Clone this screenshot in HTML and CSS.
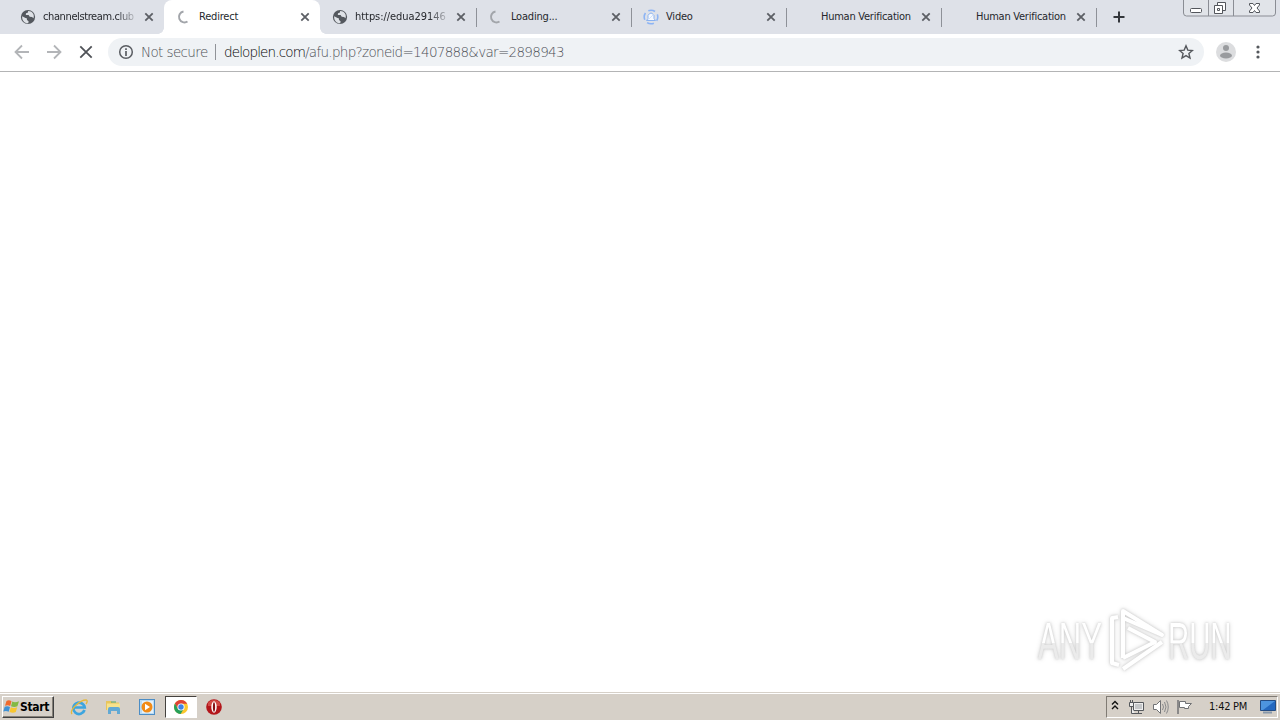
FILE: index.html
```
<!DOCTYPE html>
<html lang="en">
<head>
<meta charset="utf-8">
<title>Redirect</title>
<link rel="stylesheet" href="styles.css">
</head>
<body>
<svg width="0" height="0" class="defs">
<defs>
<symbol id="globe" viewBox="0 0 16 16"><circle cx="8" cy="8" r="7.1" fill="#54585e"/><path d="M2.2 7.2 5.5 9 6.8 9.2 7 11 8.6 12.3 8.3 14.2C4.9 14.5 1.6 11.5 2.2 7.2ZM8.2 2.1 7.7 3.8 6 4.2 5.8 6H8.6L9.7 7.700 12 8 13.5 9.3C14.9 5.5 12 2 8.2 2.1Z" fill="#dee1e6"/></symbol>
<symbol id="spin" viewBox="0 0 16 16"><path d="M7.500 2.500A5.500 5.500 0 1 0 11.500 12.500" fill="none" stroke="#a2a5aa" stroke-width="2"/></symbol>
<symbol id="x" viewBox="0 0 10 10"><path d="M1.300 1.300 8.700 8.700M8.700 1.300 1.300 8.700" stroke="#5c5f65" stroke-width="1.800"/></symbol>
</defs>
</svg>
<div class="screen">
<header class="tabs">
  <div class="tab wide"><svg class="fav"><use href="#globe"/></svg><span class="title fade s1">channelstream.club</span><svg class="close"><use href="#x"/></svg></div>
  <div class="tab wide active"><svg class="fav"><use href="#spin"/></svg><span class="title s2">Redirect</span><svg class="close"><use href="#x"/></svg></div>
  <div class="tab wide"><svg class="fav"><use href="#globe"/></svg><span class="title fade s3">https://edua29146</span><svg class="close"><use href="#x"/></svg></div>
  <div class="tab sep"><svg class="fav"><use href="#spin"/></svg><span class="title s4">Loading...</span><svg class="close"><use href="#x"/></svg></div>
  <div class="tab sep"><svg class="fav" viewBox="0 0 16 16"><circle cx="8" cy="8" r="6.800" fill="none" stroke="#8cb4f5" stroke-width="1.600" stroke-dasharray="7 3.700" stroke-dashoffset="3"/><path d="M3.500 11.500 5 9.500V6.500Q8 1.500 11 6.500V9.500l1.500 2Z" fill="#f5f9ff" stroke="#8ab2f0"/><path d="m5.500 10.500 5-5" stroke="#cfe0fa"/></svg><span class="title s5">Video</span><svg class="close"><use href="#x"/></svg></div>
  <div class="tab sep"><span class="fav"></span><span class="title s6">Human Verification</span><svg class="close"><use href="#x"/></svg></div>
  <div class="tab sep"><span class="fav"></span><span class="title s6">Human Verification</span><svg class="close"><use href="#x"/></svg></div>
  <div class="newtab"><svg width="12" height="12"><path d="M6 .5v11M.5 6h11" stroke="#33363b" stroke-width="2"/></svg></div>
  <svg class="winctl" width="94" height="18" fill="none"><path d="M.5 0v13q0 3 3 3h86q3 0 3-3V0" fill="#e1e4e9" stroke="#8a8d94"/><path d="M25.500 0v16M50.500 0v16" stroke="#8a8d94"/><g stroke="#53565c" fill="#fff"><rect x="7.500" y="8.500" width="11" height="4" rx="1"/><path d="M34.500 2.500h8v8h-8z"/><path d="M31.500 5.500h8v8h-8z"/><path d="M34.500 8.500h2v2h-2z"/><path d="M66.500 3.500h3.500l1.500 2 1.500-2h3.500v1.500l-2.500 3 2.500 3v1.500H73l-1.500-2-1.500 2h-3.500V11l2.500-3-2.500-3Z"/></g></svg>
</header>
<nav class="toolbar">
  <svg class="nav" viewBox="0 0 16 16"><path d="M15 8H2M8 1.500 1.500 8 8 14.500" stroke="#b3b5b8"/></svg>
  <svg class="nav" viewBox="0 0 16 16"><path d="M1 8h13M8 1.500 14.500 8 8 14.500" stroke="#b3b5b8"/></svg>
  <svg class="nav" viewBox="0 0 16 16"><path d="m2.300 2.300 11.400 11.400m0-11.400L2.300 13.700" stroke="#4f5257"/></svg>
  <div class="omni">
    <svg class="info" viewBox="0 0 16 16"><circle cx="8" cy="8" r="6.300" fill="none" stroke="#5a5d62" stroke-width="1.500"/><path d="M8 4.200v1.700M8 7v5" stroke="#5a5d62" stroke-width="1.700"/></svg>
    <span class="secure">Not secure</span><span class="bar"></span><span class="host">deloplen.com</span><span class="path">/afu.php?zoneid=1407888&amp;var=2898943</span>
    <svg class="star" viewBox="0 0 16 16"><path d="m8 1.800 1.800 4.300 4.600.4-3.500 3 1.100 4.600L8 11.600l-4 2.500 1.100-4.600-3.500-3 4.600-.4Z" fill="none" stroke="#55585d" stroke-width="1.400"/></svg>
  </div>
  <svg class="avatar" viewBox="0 0 20 20"><circle cx="10" cy="10" r="10" fill="#dcdddf"/><circle cx="10" cy="6" r="3" fill="#999b9e"/><ellipse cx="10" cy="13.500" rx="6" ry="3" fill="#999b9e"/></svg>
  <svg class="dots" viewBox="0 0 4 14"><g fill="#55585d"><circle cx="2" cy="2" r="1.600"/><circle cx="2" cy="7" r="1.600"/><circle cx="2" cy="12" r="1.600"/></g></svg>
</nav>
<main class="page">
  <div class="watermark">
    <span class="wm any">ANY</span>
    <svg class="play" width="58" height="64" viewBox="0 0 58 64"><g fill="none" stroke="#fff" stroke-width="4" stroke-linejoin="round"><path d="M9 9 3 10v45l7 2"/><path d="M14 50V3l39 24L14 10"/><path d="M14 50 46 34 19 20M53 34 14 61"/></g></svg>
    <span class="wm run">RUN</span>
  </div>
</main>
<footer class="taskbar">
  <div class="start"><svg width="17" height="16" viewBox="0 0 17 16"><path d="M3.500 2Q6 .5 8.500 2.300L7.200 7Q5 5.700 2 6.800Z" fill="#ef6a2e"/><path d="M9.300 2.600Q12 4 16 2.300L14.400 7.300Q11 8.500 8 7.200Z" fill="#83b944"/><path d="M1.700 7.700Q4.500 6.700 7 8L5.700 12.700Q3 11.300.3 12.500Z" fill="#3e91d5"/><path d="M7.800 8.300Q11 9.500 14.200 8.200L12.800 13Q10 14.500 6.500 13Z" fill="#f8c630"/></svg><span>Start</span></div>
  <div class="quick">
    <svg viewBox="0 0 18 18"><path d="M14.500 12A5.700 5.700 0 1 1 14.700 9.500H4" fill="none" stroke="#3da5df" stroke-width="2.700"/><path d="M2 16C-1 12 10 2 16 2c2 0 1 3 0 4" fill="none" stroke="#e6b83a" stroke-width="1.300"/></svg>
    <svg viewBox="0 0 18 18"><path d="M2 3h5l1 1.500h7V12H2Z" fill="#e8c55c"/><path d="M3 5.500h13V12H3Z" fill="#f7e28c"/><path d="M4 16v-5q0-2 2-2h8q2 0 2 2v5h-3v-3H7v3Z" fill="#62a9d4"/><path d="M7 4h5" stroke="#55a864"/></svg>
    <svg viewBox="0 0 18 18"><rect x="1.500" y="1.500" width="15" height="15" fill="#b9dbf4" stroke="#4c8dc5"/><rect x="4" y="3" width="11" height="12" fill="#e4f1fa"/><circle cx="9" cy="9" r="5.500" fill="#f18b16"/><path d="m7 5.800 5 3.200-5 3.200Z" fill="#fff"/></svg>
    <div class="pressed"><svg viewBox="0 0 18 18"><circle cx="9" cy="9" r="7" fill="#fbc72e"/><path d="M2.900 5.600A7 7 0 0 1 15.200 5.800H9L6 11Z" fill="#df4336"/><path d="M2.900 5.600A7 7 0 0 0 8.600 16L12 10.500 6 11Z" fill="#26a05a"/><circle cx="9" cy="9" r="3.600" fill="#fff"/><circle cx="9" cy="9" r="2.700" fill="#3e83e6"/></svg></div>
    <svg viewBox="0 0 18 18"><circle cx="9" cy="9" r="7.800" fill="#b3161b"/><path d="M3 5a7 6 0 0 1 12 0v3H3Z" fill="#d24a46"/><ellipse cx="9" cy="9" rx="2.700" ry="5.800" fill="#fff"/><ellipse cx="9" cy="9" rx="1.100" ry="4.800" fill="#871015"/></svg>
  </div>
  <div class="tray">
    <svg class="chev" width="8" height="11" viewBox="0 0 8 11"><path d="m1 4.500 3-3 3 3M1 9l3-3 3 3" fill="none" stroke="#111" stroke-width="1.400"/></svg>
    <svg class="net" width="17" height="16" viewBox="0 0 17 16"><g fill="#eee" stroke="#55585c"><path d="M5.500 3.500h10v8h-10zM7 14.500h7M10.500 12v2"/><path d="M1.500 3.500h4v4h-4zM3.500 8v6.500H7M2.500 1v2M4.500 1v2"/></g><path d="M7 5h7v5H7Z" fill="#c5c7c9"/></svg>
    <svg class="vol" width="17" height="16" viewBox="0 0 17 16"><path d="M1.500 5.500h3l4-4v13l-4-4h-3Z" fill="#fff" stroke="#707275"/><path d="M10.500 5q2 3 0 6M12.500 3q3 5 0 10M14.500 1.500q3.500 6.500 0 13" fill="none" stroke="#88898b"/></svg>
    <svg class="flag" width="17" height="16" viewBox="0 0 17 16"><path d="M2 1v14" stroke="#707275" stroke-width="1.500"/><path d="M3.500 2.500h6v2h6l-3 3v2h-4v-1h-5Z" fill="#fff" stroke="#707275"/></svg>
    <span class="clock">1:42 PM</span>
    <svg class="desk" width="16" height="14" viewBox="0 0 16 14"><path d="M.5.500h15v10H.5Z" fill="#2468bf" stroke="#244c83"/><path d="M1 1h14L3 10H1Z" fill="#4d94de"/><path d="M3 12.500h9" stroke="#8898aa" stroke-width="2"/></svg>
  </div>
</footer>
</div>
</body>
</html>
```
FILE: styles.css
```
* { box-sizing: border-box; }
body { margin: 0; background: #fff; font-family: "DejaVu Sans Condensed", "DejaVu Sans", sans-serif; font-stretch: condensed; }
svg { display: block; flex: none; }
.defs { position: absolute; }
.screen { width: 1280px; height: 720px; display: flex; flex-direction: column; overflow: hidden; }
.tabs { height: 34px; flex: none; background: #dee1e8; display: flex; padding-left: 8px; }
.tab { width: 155px; height: 34px; flex: none; display: flex; align-items: center; padding-left: 12px; }
.tab.wide { width: 156px; }
.tab.active { position: relative; background: #fff; border-radius: 8px 8px 0 0; }
.active::before, .active::after { content: ""; position: absolute; bottom: 0; width: 6px; height: 6px; }
.active::before { left: -6px; background: radial-gradient(circle at 0 0, transparent 5.500px, #fff 6px); }
.active::after { right: -6px; background: radial-gradient(circle at 100% 0, transparent 5.500px, #fff 6px); }
.fav { width: 16px; height: 16px; flex: none; }
.title { width: 92px; margin-left: 7px; font-size: 11px; line-height: 16px; color: #26282d; white-space: nowrap; flex: none; }
.fade { -webkit-mask-image: linear-gradient(90deg, #000 80%, transparent 104%); mask-image: linear-gradient(90deg, #000 80%, transparent 104%); }
.close { width: 10px; height: 10px; margin-left: 9px; }
.sep { background: linear-gradient(#8e9198, #8e9198) 0 8px / 1px 19px no-repeat; }
.sep .close { margin-left: 8px; }
.newtab { width: 87px; flex: none; display: flex; align-items: center; padding-left: 17px; background: linear-gradient(#8e9198, #8e9198) 0 8px / 1px 19px no-repeat; }
.s1 { letter-spacing: -.39px; }
.s2, .s4, .s5 { letter-spacing: -.2px; }
.s3 { letter-spacing: -.05px; }
.s6 { letter-spacing: -.25px; }
.toolbar { height: 38px; flex: none; display: flex; align-items: center; padding: 0 0 2px 14px; border-bottom: 1px solid #b3b4b5; background: #fff; }
.nav { width: 16px; height: 16px; margin-right: 16px; fill: none; stroke-width: 1.8; }
.omni { width: 1096px; height: 28px; margin-left: -2px; border-radius: 14px; background: #eff2f5; display: flex; align-items: center; padding-left: 10px; font: 200 13.5px/20px "DejaVu Sans", sans-serif; white-space: nowrap; color: #4d5055; }
.info { width: 16px; height: 16px; margin-right: 7px; }
.secure { width: 74px; letter-spacing: -.62px; }
.bar { width: 1px; height: 16px; background: #909398; margin-right: 8px; }
.host { width: 81px; color: #000; letter-spacing: -.85px; }
.path { width: 260px; letter-spacing: -.69px; }
.star { width: 16px; height: 16px; margin-left: auto; margin-right: 10px; }
.avatar { width: 20px; height: 20px; margin-left: 12px; }
.dots { width: 4px; height: 14px; margin-left: 20px; }
.page { flex: 1; display: flex; justify-content: flex-end; align-items: flex-end; padding: 0 46px 20px 0; background: #fff; }
.watermark { display: flex; align-items: center; width: 196px; height: 64px; filter: drop-shadow(0 0 1px #ccc) drop-shadow(0 0 2px #ddd); }
.wm { width: 114px; padding-top: 3px; font: 51px/64px "Liberation Sans", sans-serif; background: linear-gradient(#fff 54%, #ebebeb 54%); -webkit-background-clip: text; background-clip: text; color: transparent; transform-origin: 0 50%; flex: none; }
.any { margin-right: -43px; transform: scaleX(.61); }
.play { margin-right: 1px; }
.run { margin-right: -50px; transform: scaleX(.575); }
.taskbar { height: 28px; flex: none; display: flex; align-items: center; background: #d6d0c8; border-top: 1px solid #d6d0c8; box-shadow: inset 0 1px #fff; padding: 2px 2px 2px; }
.start { width: 52px; height: 22px; display: flex; align-items: center; padding-left: 0; border: 1px solid; border-color: #fff #404040 #404040 #fff; box-shadow: inset -1px -1px #858078; font: bold 12px/18px "DejaVu Sans Condensed", sans-serif; font-stretch: condensed; color: #000; letter-spacing: -.35px; }
.quick { display: flex; align-items: center; margin-left: 16px; }
.quick svg { width: 18px; height: 18px; }
.quick > svg { margin-right: 16px; }
.pressed { width: 32px; height: 22px; margin: 0 8px 0 -7px; background: #fff; border: 1px solid; border-color: #45423e #fff #fff #45423e; display: flex; align-items: center; justify-content: center; }
.tray { margin-left: auto; width: 172px; height: 22px; border: 1px solid; border-color: #807b74 #fff #fff #807b74; display: flex; align-items: center; padding-left: 4px; }
.chev { margin-bottom: 2px; }
.net { margin-left: 9px; }
.vol { margin-left: 7px; }
.flag { margin-left: 7px; }
.clock { width: 40px; margin-left: 16px; font-size: 11px; line-height: 16px; letter-spacing: -.25px; white-space: nowrap; color: #111; }
.desk { margin-left: 11px; }
```
